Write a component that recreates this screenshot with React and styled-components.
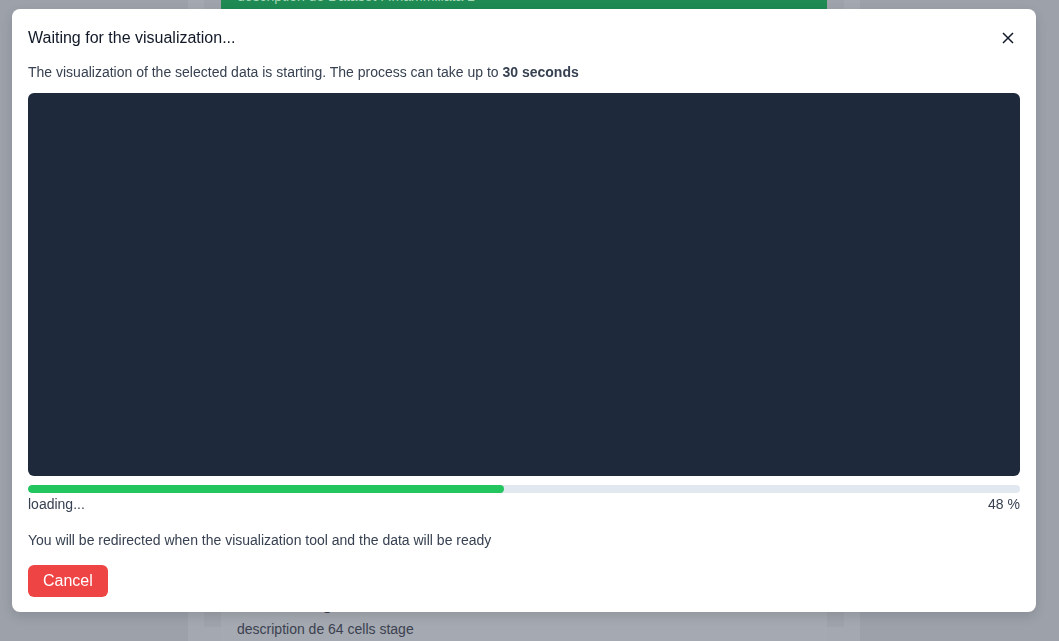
import React from "react";
import styled, { createGlobalStyle } from "styled-components";

const GlobalStyle = createGlobalStyle`
  html, body {
    margin: 0;
    padding: 0;
    height: 100%;
    overflow: hidden;
  }
  body {
    font-family: "Liberation Sans", "Noto Sans", sans-serif;
    background-color: #9ca1aa;
  }
`;

const Page = styled.div`
  display: flex;
  height: 641px;
  background-color: #9ca1aa;
`;

const Side = styled.div`
  width: 188px;
  flex-shrink: 0;
`;

const Main = styled.div`
  width: 640px;
  padding: 0 16px;
  background-color: #a4a8b0;
`;

const Inner = styled.div`
  height: 100%;
  padding: 0 17px;
  background-color: #9fa3ab;
`;

const CardList = styled.div`
  display: flex;
  flex-direction: column;
  gap: 16px;
  margin-top: -14px;
`;

const Card = styled.div`
  padding: ${(p) => (p.$tall ? "14px 16px 17px" : "0 16px 6px")};
  background-color: ${(p) => (p.$active ? "#1f8a53" : "#a5a9b1")};
  color: ${(p) => (p.$active ? "#a3d9b6" : "#3b4150")};
  font-size: 14px;
  line-height: 20px;
`;

const CardTitle = styled.div`
  margin-bottom: 3px;
  font-size: 16px;
  font-weight: bold;
  line-height: 22px;
`;

const Overlay = styled.div`
  position: fixed;
  inset: 0;
  padding: 9px 23px 29px 12px;
  display: flex;
  align-items: flex-start;
`;

const Modal = styled.div`
  width: 100%;
  box-sizing: border-box;
  background-color: #ffffff;
  border-radius: 8px;
  box-shadow: 0 4px 12px rgba(0, 0, 0, 0.12);
  padding: 18px 16px 15px;
  color: #374151;
  display: flex;
  flex-direction: column;
`;

const Header = styled.div`
  display: flex;
  align-items: center;
  justify-content: space-between;
  height: 22px;
`;

const Title = styled.h3`
  margin: 0;
  font-size: 16px;
  font-weight: normal;
  color: #111827;
`;

const CloseButton = styled.button`
  border: none;
  background: none;
  padding: 0;
  margin-right: 6px;
  width: 12px;
  height: 12px;
  display: flex;
  cursor: pointer;
`;

const Text = styled.p`
  margin: ${(p) => p.$margin || "0"};
  font-size: 14px;
  line-height: 20px;
  color: #374151;
`;

const Screen = styled.div`
  margin-top: 11px;
  height: 383px;
  background-color: #1e293b;
  border-radius: 6px;
`;

const Track = styled.div`
  margin-top: 9px;
  height: 8px;
  background-color: #e2e8f0;
  border-radius: 999px;
  overflow: hidden;
`;

const Fill = styled.div`
  height: 100%;
  background-color: #22c55e;
  border-radius: 999px;
`;

const ProgressInfo = styled.div`
  display: flex;
  justify-content: space-between;
  margin-top: 1px;
  font-size: 14px;
  line-height: 20px;
`;

const Actions = styled.div`
  margin-top: 15px;
  display: flex;
`;

const CancelButton = styled.button`
  background-color: #ef4444;
  color: #ffffff;
  border: none;
  border-radius: 6px;
  padding: 0 15px;
  height: 32px;
  font-family: inherit;
  font-size: 16px;
  cursor: pointer;
  &:hover {
    background-color: #dc2626;
  }
`;

const stages = [
  "Dataset P.mammillata 2",
  "32 cells stage",
  "Gastrula stage",
  "Neurula stage",
  "Tailbud stage",
  "Larva stage",
  "64 cells stage",
];

const progress = 48;

const App = () => {
  return (
    <>
      <GlobalStyle />
      <Page>
        <Side />
        <Main>
          <Inner>
            <CardList>
              <Card $active>description de Dataset P.mammillata 1</Card>
              {stages.map((name) => (
                <Card $tall key={name}>
                  <CardTitle>{name}</CardTitle>
                  description de {name}
                </Card>
              ))}
            </CardList>
          </Inner>
        </Main>
      </Page>
      <Overlay>
        <Modal>
          <Header>
            <Title>Waiting for the visualization...</Title>
            <CloseButton aria-label="Close">
              <svg width="12" height="12" viewBox="0 0 12 12">
                <path d="M1 1L11 11M11 1L1 11" stroke="#111827" strokeWidth="1.5" />
              </svg>
            </CloseButton>
          </Header>
          <Text $margin="13px 0 0">
            The visualization of the selected data is starting. The process can take up to <b>30 seconds</b>
          </Text>
          <Screen />
          <Track>
            <Fill style={{ width: `${progress}%` }} />
          </Track>
          <ProgressInfo>
            <span>loading...</span>
            <span>{progress} %</span>
          </ProgressInfo>
          <Text $margin="16px 0 0">You will be redirected when the visualization tool and the data will be ready</Text>
          <Actions>
            <CancelButton>Cancel</CancelButton>
          </Actions>
        </Modal>
      </Overlay>
    </>
  );
};

export default App;
